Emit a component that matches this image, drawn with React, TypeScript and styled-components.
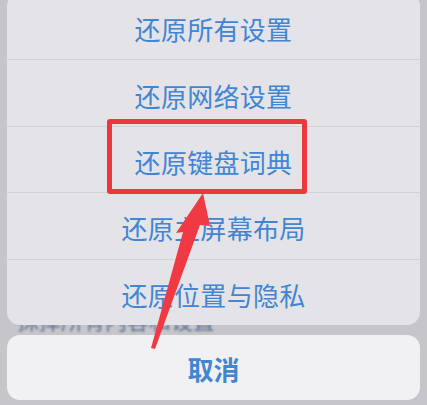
import styled, { createGlobalStyle } from "styled-components";

const GlobalStyle = createGlobalStyle`
  html, body {
    margin: 0;
    padding: 0;
    background: #c6c6ca;
    overflow: hidden;
  }
`;

const Screen = styled.div`
  position: relative;
  width: 427px;
  height: 405px;
  padding: 0 7px;
  box-sizing: border-box;
  overflow: hidden;
  font-family: "Noto Sans CJK SC", "Noto Sans", sans-serif;
`;

const Sheet = styled.div`
  margin-top: -7px;
  background: #e4e4e8;
  border-radius: 13px;
  overflow: hidden;
`;

const Option = styled.div<{ $first?: boolean }>`
  height: 66.4px;
  box-sizing: border-box;
  border-top: ${({ $first }) => ($first ? "none" : "1px solid #d2d2d7")};
  display: flex;
  align-items: center;
  justify-content: center;
  padding-top: 4px;
  font-size: 26px;
  color: #4285d3;
  letter-spacing: 0.3px;
`;

/* strip of the page behind the sheet, showing the foot of a line of text */
const Gap = styled.div`
  height: 10px;
  overflow: hidden;
  padding-left: 10px;
`;

const BehindText = styled.div`
  margin-top: -17px;
  font-size: 22px;
  line-height: 22px;
  color: #4c5f8c;
  filter: blur(0.8px);
  opacity: 0.85;
`;

const CancelButton = styled.div`
  height: 65px;
  background: #f1f1f3;
  border-radius: 13px;
  display: flex;
  align-items: center;
  justify-content: center;
  padding-top: 2px;
  box-sizing: border-box;
  font-size: 26px;
  font-weight: 700;
  color: #4285d3;
`;

const HighlightBox = styled.div`
  position: absolute;
  left: 107px;
  top: 119px;
  width: 200px;
  height: 75px;
  box-sizing: border-box;
  border: 5px solid #ec3640;
  border-radius: 3px;
`;

const ArrowLayer = styled.svg`
  position: absolute;
  left: 0;
  top: 0;
  pointer-events: none;
`;

const options = [
  "还原所有设置",
  "还原网络设置",
  "还原键盘词典",
  "还原主屏幕布局",
  "还原位置与隐私",
];

export default function App() {
  return (
    <>
      <GlobalStyle />
      <Screen>
        <Sheet>
          {options.map((label, i) => (
            <Option key={label} $first={i === 0}>
              {label}
            </Option>
          ))}
        </Sheet>
        <Gap>
          <BehindText>抹掉所有内容和设置</BehindText>
        </Gap>
        <CancelButton>取消</CancelButton>
        <HighlightBox />
        <ArrowLayer width="427" height="405" viewBox="0 0 427 405">
          <path
            d="M203 193 L210 226 L200 225 L155 349 L151 348 L183 232 L176 233 Z"
            fill="#ef3a43"
            strokeLinejoin="round"
          />
        </ArrowLayer>
      </Screen>
    </>
  );
}
